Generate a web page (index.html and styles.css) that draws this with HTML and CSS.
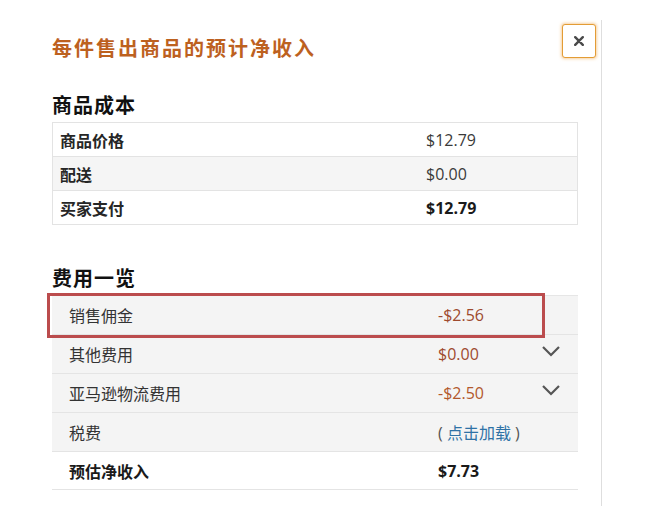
FILE: index.html
```html
<!DOCTYPE html>
<html lang="zh-CN">
<head>
<meta charset="utf-8">
<title>每件售出商品的预计净收入</title>
<link rel="stylesheet" href="styles.css">
</head>
<body>
<div class="panel">
  <h1 class="title">每件售出商品的预计净收入</h1>
  <button class="close" aria-label="关闭"><svg viewBox="0 0 10 10" width="10" height="10"><path d="M1.2 1.2 L8.8 8.8 M8.8 1.2 L1.2 8.8" stroke="#4a4a4a" stroke-width="2.4" stroke-linecap="round"/></svg></button>

  <h2 class="section">商品成本</h2>
  <div class="cost-table">
    <div class="row"><span class="label">商品价格</span><span class="value">$12.79</span></div>
    <div class="row alt"><span class="label">配送</span><span class="value">$0.00</span></div>
    <div class="row"><span class="label">买家支付</span><span class="value strong">$12.79</span></div>
  </div>

  <h2 class="section section-fees">费用一览</h2>
  <div class="fee-table">
    <div class="frow"><span class="flabel">销售佣金</span><span class="fvalue neg">-$2.56</span><span class="chev"></span></div>
    <div class="frow"><span class="flabel">其他费用</span><span class="fvalue neg">$0.00</span><span class="chev"><svg viewBox="0 0 20 12" width="20" height="12"><path d="M2 2 L10 10 L18 2" fill="none" stroke="#555" stroke-width="2.2"/></svg></span></div>
    <div class="frow"><span class="flabel">亚马逊物流费用</span><span class="fvalue neg2">-$2.50</span><span class="chev"><svg viewBox="0 0 20 12" width="20" height="12"><path d="M2 2 L10 10 L18 2" fill="none" stroke="#555" stroke-width="2.2"/></svg></span></div>
    <div class="frow"><span class="flabel">税费</span><span class="fvalue paren">( <span class="link">点击加载</span> )</span><span class="chev"></span></div>
    <div class="frow total"><span class="flabel">预估净收入</span><span class="fvalue strong">$7.73</span><span class="chev"></span></div>
    <div class="highlight"></div>
  </div>
</div>
</body>
</html>
```
FILE: styles.css
```css
* { box-sizing: border-box; }
html, body { margin: 0; padding: 0; background: #fff; }
body {
  font-family: "Open Sans", "Noto Sans CJK SC", sans-serif;
  color: #333;
  width: 649px;
  height: 519px;
  overflow: hidden;
}
.panel {
  position: relative;
  margin-top: 20px;
  width: 602px;
  height: 486px;
  border-right: 1px solid #dedede;
  padding: 14px 23px 0 52px;
}
.title {
  margin: 0;
  font-family: "Noto Sans CJK SC", sans-serif;
  font-size: 20px;
  line-height: 28px;
  font-weight: 700;
  letter-spacing: 2px;
  color: #bd611f;
}
.close {
  position: absolute;
  left: 562px;
  top: 4px;
  width: 34px;
  height: 34px;
  padding: 0;
  border: 1px solid #e39c35;
  border-radius: 3px;
  background: #fff;
  box-shadow: 0 0 3px 1px rgba(240, 170, 80, 0.55);
  display: flex;
  align-items: center;
  justify-content: center;
}
.section {
  margin: 29px 0 3px;
  font-family: "Noto Sans CJK SC", sans-serif;
  font-size: 20px;
  line-height: 28px;
  font-weight: 700;
  letter-spacing: 1px;
  color: #111;
}
.section-fees { margin-top: 39px; }

.cost-table {
  border: 1px solid #e3e3e3;
  width: 526px;
}
.row {
  display: grid;
  grid-template-columns: 366px 1fr;
  align-items: center;
  height: 34px;
  padding-left: 7px;
  border-bottom: 1px solid #e3e3e3;
  background: #fff;
}
.row:last-child { border-bottom: none; height: 33px; }
.row.alt { background: #f5f5f5; }
.label {
  font-family: "Noto Sans CJK SC", sans-serif;
  font-size: 16px;
  font-weight: 700;
  color: #262626;
}
.value {
  font-size: 16px;
  color: #3a3a3a;
}
.strong { font-weight: 700; color: #1a1a1a; }

.fee-table {
  position: relative;
  width: 526px;
  border-top: 1px solid #e6e6e6;
}
.frow {
  display: grid;
  grid-template-columns: 369px 103px 20px;
  align-items: center;
  height: 39px;
  padding-left: 17px;
  background: #f4f4f4;
  border-bottom: 1px solid #e4e4e4;
}
.frow.total { background: #fff; height: 38px; }
.flabel {
  font-family: "Noto Sans CJK SC", sans-serif;
  font-size: 16px;
  color: #333;
}
.total .flabel { font-weight: 700; color: #1a1a1a; }
.fvalue { font-size: 16px; }
.neg { color: #9e4a2e; }
.neg2 { color: #b2582c; }
.paren { color: #555; font-family: "Open Sans", "Noto Sans CJK SC", sans-serif; }
.link { color: #2f72a6; font-family: "Noto Sans CJK SC", sans-serif; }
.chev { display: flex; align-items: center; height: 20px; margin-top: -6px; }
.highlight {
  position: absolute;
  left: -5px;
  top: -3px;
  width: 498px;
  height: 45px;
  border: 3px solid #bb4c4d;
}
```
